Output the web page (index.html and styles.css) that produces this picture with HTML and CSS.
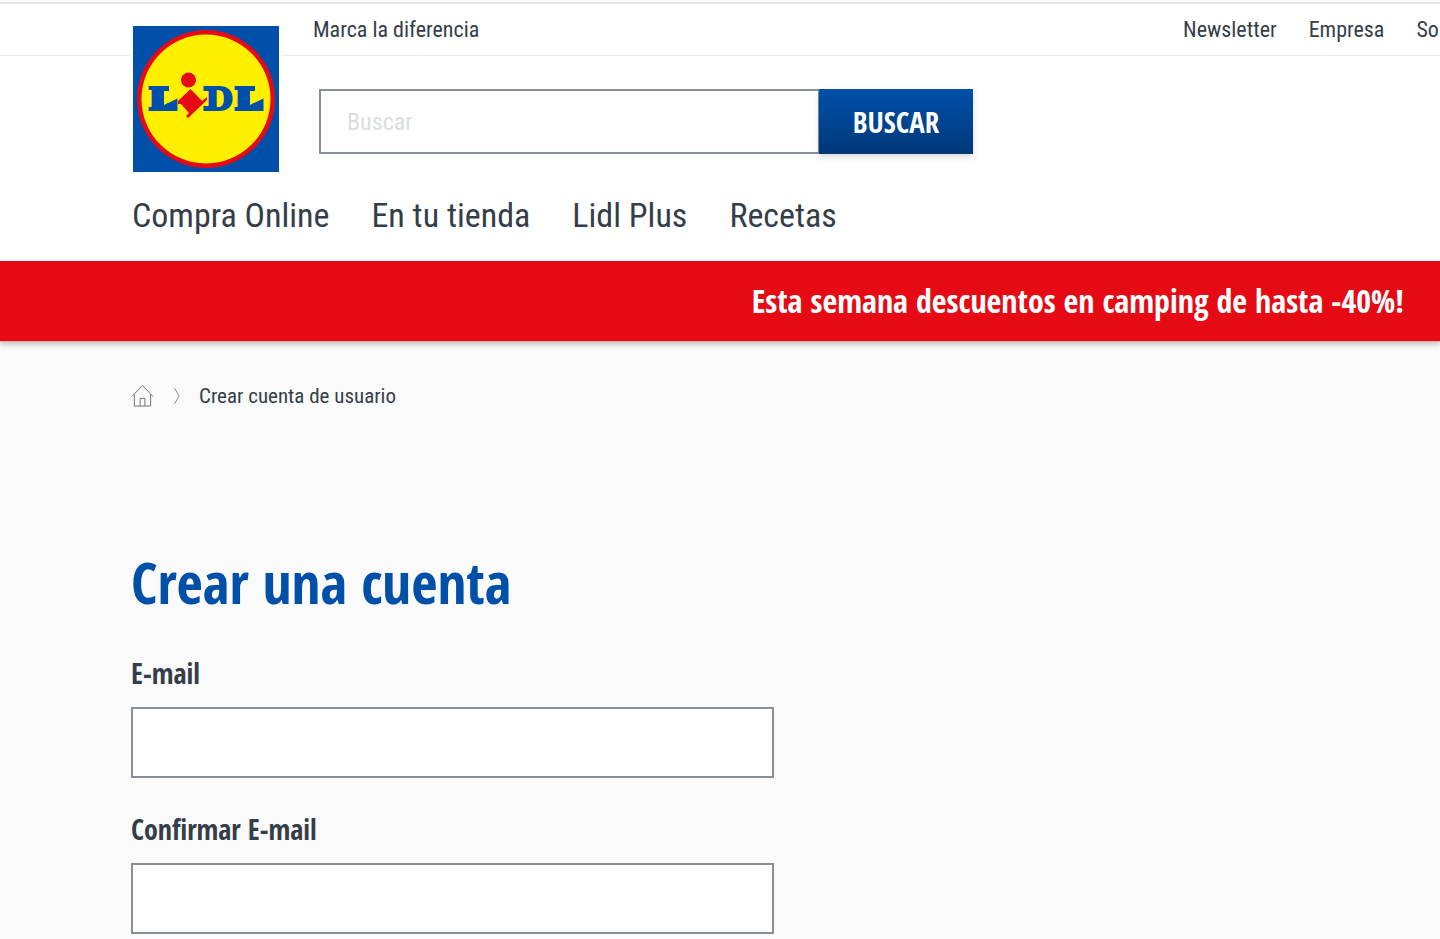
FILE: index.html
```html
<!DOCTYPE html>
<html lang="es">
<head>
<meta charset="utf-8">
<meta name="viewport" content="width=device-width, initial-scale=1">
<title>Crear cuenta de usuario</title>
<link rel="stylesheet" href="styles.css">
</head>
<body>
<header class="header">
  <div class="topbar">
    <a class="topbar-link" href="#">Marca la diferencia</a>
    <nav class="topbar-nav">
      <a class="topbar-link" href="#">Newsletter</a>
      <a class="topbar-link" href="#">Empresa</a>
      <a class="topbar-link" href="#">So</a>
    </nav>
  </div>
  <a class="logo" href="#" aria-label="Lidl">
    <svg viewBox="0 0 146 146">
      <rect width="146" height="146" fill="#0050aa"/>
      <circle cx="73" cy="73" r="69" fill="#e60a14"/>
      <circle cx="73" cy="73" r="64.5" fill="#fff000"/>
      <g class="logo-letters">
        <text x="15" y="84">L</text>
        <text x="72" y="84">D</text>
        <text x="101" y="84">L</text>
      </g>
      <path d="M25 60 H36 V65 H31 V79 L44.500 72.500 V85 H25 Z M111 60 H122 V65 H117 V79 L130.500 72.500 V85 H111 Z M70.500 60 H78 V65 H70.500 Z M70.500 80 H78 V85 H70.500 Z" fill="#0050aa"/>
      <circle cx="55.500" cy="54" r="7.500" fill="#e60a14"/>
      <path d="M57.500 63 L69 75 L74 71 L74 74 L55 92 L53 90 L56 87 L48 78 L45 78 L45 75 Z" fill="#e60a14"/>
    </svg>
  </a>
  <form class="search">
    <input class="search-input" type="search" placeholder="Buscar" aria-label="Buscar">
    <button class="search-button" type="button">BUSCAR</button>
  </form>
  <nav class="main-nav">
    <a href="#">Compra Online</a>
    <a href="#">En tu tienda</a>
    <a href="#">Lidl Plus</a>
    <a href="#">Recetas</a>
  </nav>
</header>
<div class="promo">Esta semana descuentos en camping de hasta -40%!</div>
<main class="content">
  <nav class="breadcrumb" aria-label="Ruta">
    <a class="home" href="#" aria-label="Inicio">
      <svg viewBox="0 0 24 24"><path d="M1 13 L12 1.500 L23 13 M3.500 11 V23 H20.500 V11 M9.500 23 V15 H14.500 V23"/></svg>
    </a>
    <svg class="chevron" viewBox="0 0 8 18"><path d="M1.500 1 L6 9 L1.500 17"/></svg>
    <span>Crear cuenta de usuario</span>
  </nav>
  <h1 class="title">Crear una cuenta</h1>
  <form class="account-form">
    <div class="field">
      <label for="email">E-mail</label>
      <input id="email" type="email">
    </div>
    <div class="field">
      <label for="email-confirm">Confirmar E-mail</label>
      <input id="email-confirm" type="email">
    </div>
  </form>
</main>
</body>
</html>
```
FILE: styles.css
```css
* { box-sizing: border-box; }
body {
  margin: 0;
  background: #fafafa;
  color: #353e48;
  font-family: "Roboto Condensed", "Liberation Sans Narrow", sans-serif;
}
a { color: inherit; text-decoration: none; }
.header {
  position: relative;
  padding-top: 2px;
  background: #fff;
}
.topbar {
  display: flex;
  justify-content: space-between;
  align-items: center;
  height: 54px;
  padding-left: 313px;
  border-top: 2px solid #e3e6e6;
  border-bottom: 1px solid #e8ebeb;
  overflow: hidden;
  white-space: nowrap;
}
.topbar-nav {
  display: flex;
  flex: 0 0 257px;
  gap: 32px;
}
.topbar-link { font-size: 22px; line-height: 32px; }
.logo {
  position: absolute;
  top: 26px;
  left: 133px;
  width: 146px;
  height: 146px;
  box-shadow: 0 0 0 2px #fff;
}
.logo svg { display: block; }
.logo-letters {
  font-family: "DejaVu Serif", serif;
  font-size: 32px;
  font-weight: bold;
  fill: #0050aa;
  stroke: #0050aa;
  stroke-width: 2px;
}
.search {
  display: flex;
  max-width: 973px;
  padding: 33px 0 0 319px;
}
.search-input {
  flex: 1;
  min-width: 0;
  height: 65px;
  padding: 0 26px;
  border: 2px solid #8a8f96;
  border-right-width: 1px;
  border-radius: 0;
  background: #fff;
  font: inherit;
  font-size: 24px;
  color: #353e48;
}
.search-input::placeholder { color: #dadde2; opacity: 1; }
.search-button {
  width: 154px;
  height: 65px;
  padding: 0;
  border: 0;
  background: linear-gradient(#0050aa, #003878);
  box-shadow: 0 3px 6px rgba(0, 0, 0, 0.15);
  color: #fff;
  font-family: "Open Sans Condensed", sans-serif;
  font-size: 29px;
  font-weight: bold;
}
.main-nav {
  display: flex;
  gap: 42px;
  padding: 39px 0 24px 132px;
  font-size: 34px;
  line-height: 44px;
  white-space: nowrap;
}
.promo {
  padding: 20px 36px 20px 0;
  border-bottom: 1px solid #f7a9ad;
  background: #e60a14;
  box-shadow: 0 2px 6px rgba(0, 0, 0, 0.25);
  color: #fff;
  font-family: "Open Sans Condensed", sans-serif;
  font-size: 32px;
  font-weight: bold;
  line-height: 40px;
  text-align: right;
}
.content { padding: 38px 131px 0; }
.breadcrumb {
  display: flex;
  align-items: center;
  font-size: 21px;
  line-height: 32px;
}
.breadcrumb svg { display: block; fill: none; stroke: #6b7075; }
.home { width: 23px; height: 24px; }
.breadcrumb .chevron { width: 8px; height: 18px; margin: 0 18px 0 19px; stroke: #8e9297; }
.title {
  margin: 134px 0 0;
  color: #0050aa;
  font-family: "Open Sans Condensed", sans-serif;
  font-size: 57px;
  line-height: 72px;
}
.account-form {
  display: grid;
  gap: 33px;
  max-width: 643px;
  padding-top: 37px;
}
.field label {
  display: block;
  margin-bottom: 16px;
  font-family: "Open Sans Condensed", sans-serif;
  font-size: 28px;
  font-weight: bold;
  line-height: 36px;
}
.field input {
  display: block;
  width: 100%;
  height: 71px;
  padding: 0 24px;
  border: 2px solid #8a8f96;
  border-radius: 0;
  background: #fff;
  font: inherit;
  font-size: 28px;
}
```
